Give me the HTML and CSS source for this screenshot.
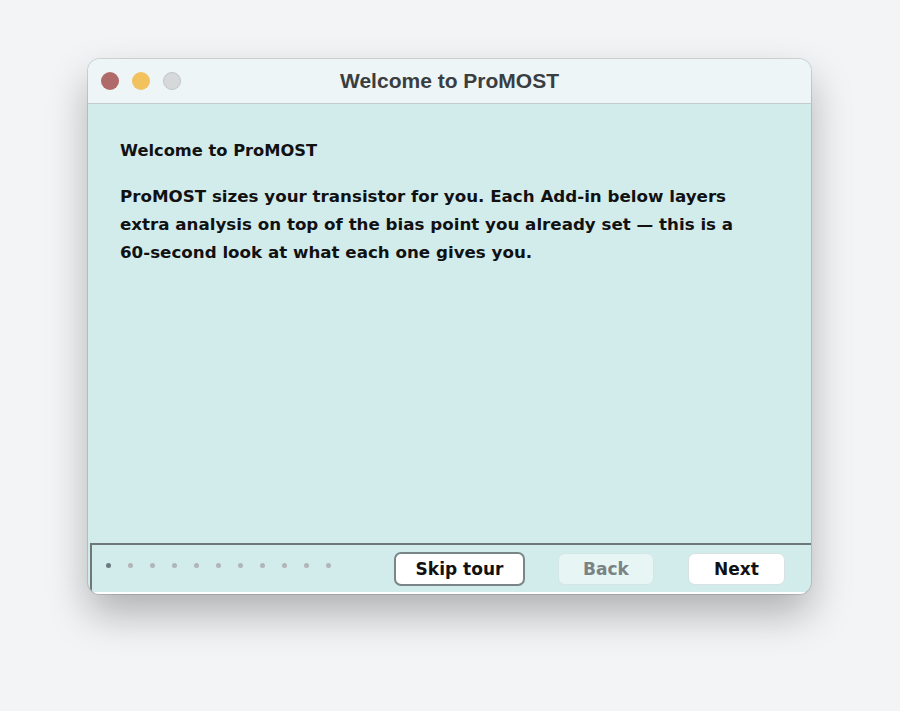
FILE: index.html
```html
<!DOCTYPE html>
<html lang="en">
<head>
  <meta charset="UTF-8">
  <title>Welcome to ProMOST</title>
  <link rel="stylesheet" href="styles.css">
</head>
<body>
  <div class="window">
    <div class="titlebar">
      <div class="lights">
        <span class="light close"></span>
        <span class="light min"></span>
        <span class="light max"></span>
      </div>
      <div class="title">Welcome to ProMOST</div>
    </div>

    <div class="content">
      <h1>Welcome to ProMOST</h1>
      <p>ProMOST sizes your transistor for you. Each Add-in below layers extra analysis on top of the bias point you already set &mdash; this is a 60-second look at what each one gives you.</p>
    </div>

    <div class="footer">
      <div class="dots">
        <span class="dot current"></span>
        <span class="dot"></span>
        <span class="dot"></span>
        <span class="dot"></span>
        <span class="dot"></span>
        <span class="dot"></span>
        <span class="dot"></span>
        <span class="dot"></span>
        <span class="dot"></span>
        <span class="dot"></span>
        <span class="dot"></span>
      </div>
      <button class="btn skip">Skip tour</button>
      <button class="btn back" disabled>Back</button>
      <button class="btn next">Next</button>
    </div>
  </div>
</body>
</html>
```

FILE: styles.css
```css
body {
  margin: 0;
  background: #f3f4f6;
  height: 711px;
  overflow: hidden;
}

.window {
  width: 723px;
  height: 535px;
  margin: 59px 0 0 88px;
  border-radius: 12px;
  background: #d2ecec;
  box-shadow: 0 20px 40px rgba(0, 0, 0, 0.28), 0 0 0 1px rgba(0, 0, 0, 0.12);
  overflow: hidden;
  display: flex;
  flex-direction: column;
}

.titlebar {
  height: 44px;
  background: #eef5f7;
  border-bottom: 1px solid #c4cccd;
  display: flex;
  align-items: center;
  position: relative;
}

.lights {
  display: flex;
  gap: 13px;
  padding-left: 13px;
}

.light {
  width: 18px;
  height: 18px;
  border-radius: 50%;
  box-sizing: border-box;
}

.light.close { background: #b06a69; }
.light.min { background: #f1c25e; }
.light.max { background: #d6d8da; border: 1px solid #c2c5c8; }

.title {
  position: absolute;
  left: 0;
  right: 0;
  text-align: center;
  font-family: "Liberation Sans", Arial, sans-serif;
  font-weight: bold;
  font-size: 21px;
  color: #3a3e41;
}

.content {
  flex: 1;
  padding: 35px 32px 0 32px;
  font-family: "Comic Sans MS", "DejaVu Sans", sans-serif;
  font-weight: bold;
  color: #111;
}

.content h1 {
  margin: 0 0 19px 0;
  font-size: 16.3px;
  line-height: 24px;
}

.content p {
  margin: 0;
  font-size: 16.7px;
  line-height: 28px;
  max-width: 640px;
}

.footer {
  height: 47px;
  margin-left: 2px;
  border-top: 2px solid #6e7879;
  border-left: 2px solid #6e7879;
  border-bottom: 2px solid #fff;
  display: flex;
  align-items: center;
  font-family: "Comic Sans MS", "DejaVu Sans", sans-serif;
}

.dots {
  display: flex;
  gap: 17px;
  padding-left: 14px;
  width: 276px;
  margin-top: -7px;
}

.dot {
  width: 5px;
  height: 5px;
  border-radius: 50%;
  background: #b1b5b7;
}

.dot.current { background: #6c7a80; }

.btn {
  font-family: "Comic Sans MS", "DejaVu Sans", sans-serif;
  font-weight: bold;
  font-size: 17px;
  height: 32px;
  border-radius: 7px;
  background: #fff;
  color: #111;
  border: 1px solid #d8e2e2;
  padding: 0;
}

.btn.skip {
  width: 131px;
  height: 34px;
  margin-left: 12px;
  border: 2px solid #7a8587;
}

.btn.back {
  width: 96px;
  margin-left: 33px;
  background: #e7f5f5;
  color: #7b8283;
  border-color: #d5e6e6;
}

.btn.next {
  width: 97px;
  margin-left: 34px;
}
```
